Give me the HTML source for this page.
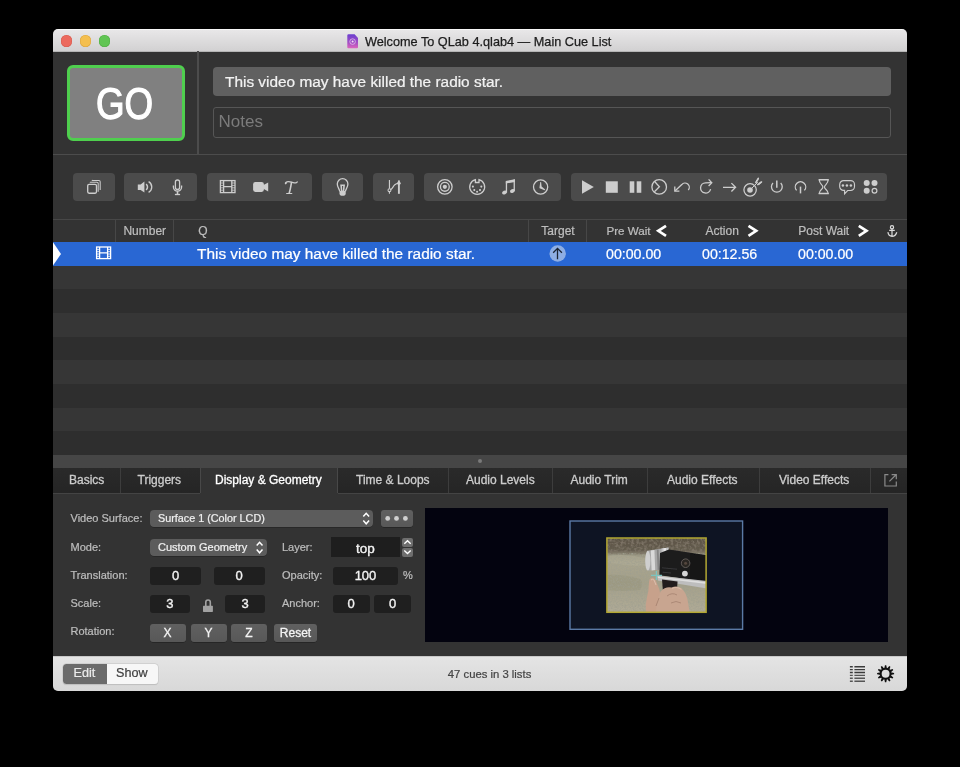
<!DOCTYPE html>
<html><head><meta charset="utf-8">
<style>
*{box-sizing:border-box;margin:0;padding:0}
html,body{width:960px;height:767px;background:#000;overflow:hidden;font-family:"Liberation Sans",sans-serif}
.a{position:absolute}
#win{position:absolute;left:53px;top:29px;width:854px;height:662px;background:#333;border-radius:5px;overflow:hidden}
#pg{position:absolute;left:-53px;top:-29px;width:960px;height:767px;will-change:transform}
.t{position:absolute;white-space:nowrap;line-height:1}
.grp{position:absolute;background:#4b4b4b;border-radius:4px;top:173px;height:28px}
.hdr{position:absolute;white-space:nowrap;line-height:1;font-size:12px;color:#bebebe}
.row{position:absolute;left:53px;width:854px;height:24px}
.vl{position:absolute;width:1px;background:#474747}
.tabd{position:absolute;top:468px;width:1px;height:25px;background:#3d3d3d}
.tab{position:absolute;white-space:nowrap;line-height:1;font-size:12px;color:#cdcdcd;top:474.2px;-webkit-text-stroke:0.3px currentColor}
.lbl{position:absolute;white-space:nowrap;line-height:1;font-size:11px;color:#bdbdbd}
.fld{position:absolute;background:#1f1f1f;border-radius:3px;color:#f4f4f4;font-size:13px;text-align:center;line-height:18px;height:18px;-webkit-text-stroke:0.35px #f4f4f4}
.pop{position:absolute;background:#5c5c5c;border-radius:4px;color:#f0f0f0;font-size:11px;white-space:nowrap;height:17px;line-height:17px;padding-left:8px;box-shadow:0 0.5px 0.5px rgba(0,0,0,.4)}
.btn{position:absolute;background:linear-gradient(#606060,#585858);border-radius:3px;color:#f4f4f4;font-size:12px;text-align:center;height:18px;line-height:18px;box-shadow:0 0.5px 0.5px rgba(0,0,0,.5);-webkit-text-stroke:0.3px #f4f4f4}
.stk{-webkit-text-stroke:0.22px currentColor}
</style></head><body>
<div id="win"><div id="pg">
  <!-- title bar -->
  <div class="a" style="left:53px;top:29px;width:854px;height:22.5px;background:linear-gradient(#e9e8e9,#d2d1d2);border-bottom:1px solid #b5b5b5;box-shadow:inset 0 1px 0 #f7f7f7"></div>
  <div class="a" style="left:60.8px;top:35.2px;width:11.5px;height:11.5px;border-radius:50%;background:#ec6a5e;box-shadow:inset 0 0 0 0.5px #d65a4e"></div>
  <div class="a" style="left:79.9px;top:35.2px;width:11.5px;height:11.5px;border-radius:50%;background:#f4bf4f;box-shadow:inset 0 0 0 0.5px #dba43d"></div>
  <div class="a" style="left:98.7px;top:35.2px;width:11.5px;height:11.5px;border-radius:50%;background:#61c554;box-shadow:inset 0 0 0 0.5px #4fad43"></div>
  <svg class="a" style="left:347px;top:33.5px" width="12" height="15" viewBox="0 0 12 15">
    <defs><linearGradient id="dg" x1="0" y1="0" x2="0" y2="1"><stop offset="0" stop-color="#6b3fcf"/><stop offset="0.6" stop-color="#a44fc4"/><stop offset="1" stop-color="#dc66bd"/></linearGradient></defs>
    <path d="M0.3 1.6 A1.3 1.3 0 0 1 1.6 0.3 H7.6 L11 4 V13.2 A1.1 1.1 0 0 1 9.9 14.3 H1.4 A1.1 1.1 0 0 1 0.3 13.2 Z" fill="url(#dg)"/>
    <circle cx="5.6" cy="7.6" r="2.8" fill="none" stroke="#e9c8f0" stroke-width="0.9" opacity="0.8"/>
    <circle cx="5.6" cy="7.6" r="1" fill="#f4e0f4"/>
  </svg>
  <div class="t" style="-webkit-text-stroke:0.25px #1c1c1c;left:365px;top:35.9px;font-size:12.7px;color:#1c1c1c">Welcome To QLab 4.qlab4 — Main Cue List</div>

  <!-- top section -->
  <div class="vl" style="left:197.4px;top:51px;height:103px;width:1.2px;background:#4c4c4c"></div>
  <div class="a" style="left:53px;top:153.9px;width:854px;height:1.1px;background:#4c4c4c"></div>
  <div class="a" style="left:66.5px;top:64.5px;width:118px;height:76.5px;border:3px solid #4fcf4e;border-radius:6px;background:#808080"></div>
  <div class="t" style="-webkit-text-stroke:1.25px #fff;left:95.6px;top:81.4px;font-size:44.8px;color:#fff;transform:scaleX(0.82);transform-origin:0 0">GO</div>
  <div class="a" style="left:213.3px;top:66.6px;width:677.5px;height:29.3px;background:#606060;border-radius:4px"></div>
  <div class="t stk" style="left:225px;top:73.5px;font-size:15.4px;color:#f2f2f2">This video may have killed the radio star.</div>
  <div class="a" style="left:213px;top:107px;width:678px;height:31px;border:1px solid #565656;border-radius:3px"></div>
  <div class="t" style="left:218.5px;top:112.5px;font-size:17px;color:#7b7b7b">Notes</div>

  <!-- toolbar groups -->
  <div class="grp" style="left:73px;width:42px"></div>
  <div class="grp" style="left:124px;width:73px"></div>
  <div class="grp" style="left:207px;width:105px"></div>
  <div class="grp" style="left:322px;width:41px"></div>
  <div class="grp" style="left:373px;width:41px"></div>
  <div class="grp" style="left:424px;width:137px"></div>
  <div class="grp" style="left:571px;width:316px"></div>
  <!-- table header -->
  <div class="a" style="left:53px;top:219px;width:854px;height:1px;background:#474747"></div>
  <div class="vl" style="left:115px;top:220px;height:22px"></div>
  <div class="vl" style="left:173px;top:220px;height:22px"></div>
  <div class="vl" style="left:528px;top:220px;height:22px"></div>
  <div class="vl" style="left:586px;top:220px;height:22px"></div>
  <div class="hdr stk" style="left:123.4px;top:224.6px">Number</div>
  <div class="hdr stk" style="left:198.3px;top:224.6px">Q</div>
  <div class="hdr stk" style="left:541.3px;top:224.6px">Target</div>
  <div class="hdr stk" style="left:606.5px;top:224.6px;font-size:11.6px">Pre Wait</div>
  <div class="hdr stk" style="left:705.5px;top:224.6px">Action</div>
  <div class="hdr stk" style="left:798.3px;top:224.6px">Post Wait</div>

  <!-- rows -->
  <div class="row" style="top:242px;background:#2967d3"></div>
  <div class="row" style="top:265.70px;height:23.64px;background:#363636"></div>
  <div class="row" style="top:289.34px;height:23.64px;background:#2e2e2e"></div>
  <div class="row" style="top:312.98px;height:23.64px;background:#363636"></div>
  <div class="row" style="top:336.62px;height:23.64px;background:#2e2e2e"></div>
  <div class="row" style="top:360.26px;height:23.64px;background:#363636"></div>
  <div class="row" style="top:383.90px;height:23.64px;background:#2e2e2e"></div>
  <div class="row" style="top:407.54px;height:23.64px;background:#363636"></div>
  <div class="row" style="top:431.18px;height:23.82px;background:#2e2e2e"></div>
  <div class="t stk" style="left:197px;top:245.5px;font-size:15.4px;color:#fff">This video may have killed the radio star.</div>
  <div class="t stk" style="left:606px;top:246.5px;font-size:14.2px;color:#fff">00:00.00</div>
  <div class="t stk" style="left:702px;top:246.5px;font-size:14.2px;color:#fff">00:12.56</div>
  <div class="t stk" style="left:798px;top:246.5px;font-size:14.2px;color:#fff">00:00.00</div>

  <!-- splitter -->
  <div class="a" style="left:53px;top:455px;width:854px;height:13px;background:#464646"></div>
  <div class="a" style="left:478px;top:459px;width:4px;height:4px;border-radius:50%;background:#7a7a7a"></div>

  <!-- tabs -->
  <div class="a" style="left:53px;top:468px;width:854px;height:26px;background:linear-gradient(#2a2a2a,#252525)"></div>
  <div class="a" style="left:53px;top:493px;width:854px;height:1px;background:#444"></div>
  <div class="a" style="left:200px;top:468px;width:138px;height:26px;background:#333"></div>
  <div class="tabd" style="left:120px"></div>
  <div class="tabd" style="left:200px;background:#484848"></div>
  <div class="tabd" style="left:337px;background:#484848"></div>
  <div class="tabd" style="left:448px"></div>
  <div class="tabd" style="left:552px"></div>
  <div class="tabd" style="left:647px"></div>
  <div class="tabd" style="left:759px"></div>
  <div class="tabd" style="left:870px"></div>
  <div class="tab" style="left:69px">Basics</div>
  <div class="tab" style="left:137.5px">Triggers</div>
  <div class="tab" style="left:215px;color:#fff">Display &amp; Geometry</div>
  <div class="tab" style="left:356px">Time &amp; Loops</div>
  <div class="tab" style="left:466px">Audio Levels</div>
  <div class="tab" style="left:570.5px">Audio Trim</div>
  <div class="tab" style="left:667px">Audio Effects</div>
  <div class="tab" style="left:779px">Video Effects</div>
  <!-- inspector -->
  <div class="lbl stk" style="left:70.5px;top:513.3px">Video Surface:</div>
  <div class="pop stk" style="left:150px;top:510px;width:223px;font-size:10.8px">Surface 1 (Color LCD)</div>
  <div class="btn" style="left:380.5px;top:510px;width:32px;height:17px"></div>
  <div class="lbl stk" style="left:70.5px;top:542.3px">Mode:</div>
  <div class="pop stk" style="left:150px;top:539px;width:117px">Custom Geometry</div>
  <div class="lbl stk" style="left:282px;top:542.3px">Layer:</div>
  <div class="fld" style="left:331px;top:537px;width:69px;height:20px;line-height:23px;font-size:13.5px;border-radius:0;background:#1e1e1e">top</div>
  <div class="a" style="left:402px;top:538px;width:11px;height:8.5px;border-radius:2px;background:#6e6e6e"></div>
  <div class="a" style="left:402px;top:548px;width:11px;height:8.5px;border-radius:2px;background:#6e6e6e"></div>

  <div class="lbl stk" style="left:70.5px;top:570.3px">Translation:</div>
  <div class="fld" style="left:150px;top:567px;width:51px">0</div>
  <div class="fld" style="left:213.5px;top:567px;width:51px">0</div>
  <div class="lbl stk" style="left:282px;top:570.3px">Opacity:</div>
  <div class="fld" style="left:333px;top:567px;width:65px">100</div>
  <div class="lbl stk" style="left:403px;top:570.3px">%</div>

  <div class="lbl stk" style="left:70.5px;top:598.3px">Scale:</div>
  <div class="fld" style="left:150px;top:595px;width:39.5px">3</div>
  <div class="fld" style="left:225px;top:595px;width:40px">3</div>
  <div class="lbl stk" style="left:282px;top:598.3px">Anchor:</div>
  <div class="fld" style="left:332.5px;top:595px;width:37px">0</div>
  <div class="fld" style="left:374px;top:595px;width:37px">0</div>

  <div class="lbl stk" style="left:70.5px;top:626.3px">Rotation:</div>
  <div class="btn" style="left:149.5px;top:623.5px;width:36px">X</div>
  <div class="btn" style="left:190.5px;top:623.5px;width:36px">Y</div>
  <div class="btn" style="left:231px;top:623.5px;width:36px">Z</div>
  <div class="btn" style="left:274px;top:623.5px;width:43px">Reset</div>

  <!-- preview -->
  <div class="a" style="left:425px;top:508px;width:463px;height:134px;background:#03030f"></div>

  <!-- bottom bar -->
  <div class="a" style="left:53px;top:656px;width:854px;height:35px;background:linear-gradient(#e4e4e4,#d8d8d8);border-top:1px solid #c8c8c8"></div>
  <div class="a" style="left:63px;top:664px;width:94.5px;height:19.5px;border-radius:3.5px;background:#f7f7f7;box-shadow:0 0 0 0.5px #c4c4c4,0 0.5px 1px rgba(0,0,0,.15)"></div>
  <div class="a" style="left:63px;top:664px;width:44px;height:19.5px;border-radius:3.5px 0 0 3.5px;background:#6b6b6b"></div>
  <div class="t stk" style="left:73.5px;top:667.3px;font-size:12.6px;color:#ececec">Edit</div>
  <div class="t stk" style="left:116px;top:667.3px;font-size:12.6px;color:#3f3f3f">Show</div>
  <div class="t stk" style="left:447.8px;top:668.8px;font-size:11.3px;color:#454545">47 cues in 3 lists</div>
</div></div>
<svg class="a" style="left:0;top:0;z-index:5" width="960" height="767" viewBox="0 0 960 767">
<g fill="none" stroke="#cdcdcd" stroke-width="1.3" stroke-linecap="butt" stroke-linejoin="miter">
  <!-- stacked windows -->
  <rect x="87.7" y="184.4" width="8.8" height="8.8" rx="1.4" stroke-width="1.35"/>
  <path d="M89.9 182.6 A0.6 0.6 0 0 1 90.5 182.3 H96.9 A1.3 1.3 0 0 1 98.2 183.6 V191.8" stroke-width="1.05"/>
  <path d="M91.9 180.7 A0.6 0.6 0 0 1 92.5 180.4 H98.9 A1.3 1.3 0 0 1 100.2 181.7 V189.9" stroke-width="1.05"/>
  <!-- speaker arcs -->
  <path d="M146.1 184.2 A3.6 3.6 0 0 1 146.1 189.9" stroke-width="1.5"/>
  <path d="M148.6 181.6 A6.2 6.2 0 0 1 148.6 192.4"/>
  <!-- mic -->
  <rect x="175.4" y="180" width="4.2" height="9.5" rx="2.1"/>
  <path d="M173.4 185.6 V187.1 A4.1 4.1 0 0 0 181.6 187.1 V185.6"/>
  <path d="M177.5 191.2 V194.2" stroke-width="1.6"/>
  <path d="M174.9 194.5 H180.1"/>
  <!-- film -->
  <rect x="220.4" y="180.6" width="14.6" height="12"/>
  <path d="M223.6 180.6 V192.6 M231.8 180.6 V192.6 M223.6 186.6 H231.8"/>
  <path d="M220.4 183 H223.6 M220.4 185.4 H223.6 M220.4 187.8 H223.6 M220.4 190.2 H223.6 M231.8 183 H235 M231.8 185.4 H235 M231.8 187.8 H235 M231.8 190.2 H235" stroke-width="0.8"/>
  <!-- bulb -->
  <path d="M339.8 191.4 C339.5 189 337.3 187.6 337.3 184 A5.3 5.3 0 0 1 347.9 184 C347.9 187.6 345.7 189 345.4 191.4"/>
  <!-- fade -->
  <path d="M389.45 180 V188.6 M389.45 191.8 V193.8" stroke-width="1.15"/>
  <path d="M398.9 180.4 V193.8" stroke-width="1.9"/>
  <path d="M390.6 189.6 C392.6 188.8 393 186.2 394.8 184.8 C395.8 184 396.8 183.5 398.2 183.3" stroke-width="1.15"/>
  <circle cx="389.45" cy="190.2" r="1.45" stroke-width="1.1"/>
  <!-- osc -->
  <circle cx="444.85" cy="186.85" r="7.25"/>
  <circle cx="444.85" cy="186.85" r="4.4"/>
  <!-- midi -->
  <path d="M475.4 179.6 A7.45 7.45 0 1 0 479 179.6 V182.5 H475.4 Z"/>
  <!-- clock -->
  <circle cx="540.6" cy="187" r="7.1"/>
  <!-- load circle -->
  <circle cx="659.2" cy="186.9" r="7.3"/>
  <path d="M654.4 181.3 L659.4 186.8 L654.4 191.8"/>
  <!-- undo -->
  <path d="M688.3 190 A3.9 3.9 0 0 0 681.8 184.6 L675.2 190.7"/>
  <path d="M674.8 186.4 V191.2 H679.4"/>
  <!-- redo -->
  <path d="M710.6 189.2 A5.1 5.1 0 1 1 705.5 182.8 L711 182.7"/>
  <path d="M708.6 179.4 L711.8 182.7 L708.6 186"/>
  <!-- arrow -->
  <path d="M723 187.3 H735.6 M731.4 183.1 L735.6 187.3 L731.4 191.5"/>
  <!-- target -->
  <circle cx="750.1" cy="189.85" r="6.2" stroke-width="1.25"/>
  <path d="M750 190 L757.8 182.2" stroke-width="1"/>
  <!-- power -->
  <path d="M773 183 A5.4 5.4 0 1 0 780.7 183"/>
  <path d="M776.8 180.4 V187.7" stroke-width="1.5"/>
  <!-- listen -->
  <path d="M796.6 190.4 A5.2 5.2 0 1 1 804.4 190.4"/>
  <path d="M800.5 186.6 V193.4" stroke-width="1.5"/>
  <!-- hourglass -->
  <path d="M818.6 179.8 H828.8 M818.6 193.6 H828.8" stroke-width="1.5"/>
  <path d="M819.3 179.8 C819.1 184.2 822.9 184.6 822.9 187 C822.9 189.4 819.1 189.8 819.3 193.6 M828.1 179.8 C828.3 184.2 824.5 184.6 824.5 187 C824.5 189.4 828.3 189.8 828.1 193.6" stroke-width="1.2"/>
  <!-- speech -->
  <path d="M843.6 180.6 H850.6 A3.9 3.9 0 0 1 854.5 184.5 V186.6 A3.9 3.9 0 0 1 850.6 190.5 H847.6 L844.6 193.8 V190.4 H843.6 A3.9 3.9 0 0 1 839.7 186.5 V184.5 A3.9 3.9 0 0 1 843.6 180.6 Z" stroke-width="1.15"/>
  <!-- 4 dots outline -->
  <circle cx="874.5" cy="190.8" r="2.4" stroke-width="1.2"/>
</g>
<g fill="#cdcdcd" stroke="none">
  <!-- speaker body -->
  <path d="M137.8 184.5 H140.6 L144.4 181.4 V192.6 L140.6 189.9 H137.8 Z"/>
  <!-- camera -->
  <rect x="253.1" y="181.9" width="10.8" height="10" rx="2.3"/>
  <path d="M263 185.3 L268.2 182.4 V191.4 L263 188.5 Z"/>
  <!-- bulb base -->
  <path d="M339.5 190.9 H345.7 V193.4 Q345.7 195.7 342.6 195.7 Q339.5 195.7 339.5 193.4 Z"/>
  <path d="M340.2 184.6 H345 L344.3 191 H340.9 Z M342 186.1 L342.3 190.6 H342.9 L343.2 186.1 Z" fill-rule="evenodd"/>
  <!-- fade nodes -->
  <circle cx="398.9" cy="183.3" r="1.75"/>
  <!-- osc dot -->
  <circle cx="444.85" cy="186.85" r="2.1"/>
  <!-- midi dots -->
  <circle cx="472.9" cy="186.6" r="1.05"/>
  <circle cx="474.3" cy="190.1" r="1.05"/>
  <circle cx="477.1" cy="191.7" r="1.05"/>
  <circle cx="480" cy="190.1" r="1.05"/>
  <circle cx="481.3" cy="186.6" r="1.05"/>
  <!-- music -->
  <path d="M505.8 181.5 Q506 180.9 506.8 180.7 L514.9 179.3 V182 L505.8 183.6 Z"/>
  <rect x="505.8" y="181.6" width="1.3" height="11"/>
  <rect x="513.6" y="179.4" width="1.3" height="11.6"/>
  <ellipse cx="504.5" cy="192.5" rx="2.5" ry="1.85" transform="rotate(-22 504.5 192.5)"/>
  <ellipse cx="512.4" cy="191" rx="2.5" ry="1.85" transform="rotate(-22 512.4 191)"/>
  <!-- clock hands -->
  <path d="M540.3 182 L541.1 182 L541.6 186.4 L545.2 189.6 L544.6 190.2 L539.6 188.2 Q539.3 187.4 539.6 186.6 Z"/>
  <!-- play stop pause -->
  <path d="M582 180.3 L593.8 187 L582 193.7 Z"/>
  <rect x="605.8" y="181.3" width="12" height="11.5"/>
  <rect x="629.7" y="181.3" width="4.6" height="11.5"/>
  <rect x="636.7" y="181.3" width="4.6" height="11.5"/>
  <!-- target dot & feathers -->
  <circle cx="750" cy="190" r="2.8"/>
  <path d="M755.4 183.2 L755.8 181 L758.6 177.4 L758.4 180 Z"/>
  <path d="M755.9 182.6 L758.3 178.4 M757.8 184.6 L761.4 182" stroke="#cdcdcd" stroke-width="1.6" stroke-linecap="round"/>
  <path d="M757.2 185 L759.4 184.8 L762.4 181.4 L760 182.2 Z"/>
  <!-- speech dots -->
  <circle cx="842.9" cy="185.6" r="1.25"/>
  <circle cx="846.9" cy="185.6" r="1.25"/>
  <circle cx="850.9" cy="185.6" r="1.25"/>
  <!-- 4 dots -->
  <circle cx="866.7" cy="183.1" r="3"/>
  <circle cx="874.5" cy="183.1" r="3"/>
  <circle cx="866.7" cy="190.8" r="3"/>
</g>
<!-- T -->
<g fill="none" stroke="#cdcdcd" stroke-linecap="round">
  <path d="M285.6 183.6 C285.6 181.8 287.6 181.4 290.2 181.9 C292.4 182.3 294.2 183.1 295.8 182.9 C296.6 182.8 297.1 182.4 297.2 181.9" stroke-width="1.25"/>
  <path d="M291.5 182.5 C290.9 186 290.2 190 289.2 193.1" stroke-width="1.55"/>
  <path d="M286.6 193.5 H291.8" stroke-width="1.1"/>
</g>
<circle cx="285.7" cy="183.3" r="0.95" fill="#cdcdcd"/>
</svg>
<svg class="a" style="left:0;top:0;z-index:6" width="960" height="767" viewBox="0 0 960 767">
<!-- header chevrons -->
<g fill="none" stroke="#fff" stroke-width="2.7" stroke-linecap="butt" stroke-linejoin="miter">
  <path d="M666 225.8 L658.3 230.8 L666 235.8"/>
  <path d="M748.5 225.8 L756.2 230.8 L748.5 235.8"/>
  <path d="M858.8 225.8 L866.5 230.8 L858.8 235.8"/>
</g>
<!-- anchor -->
<g fill="none" stroke="#dcdcdc" stroke-width="1.2">
  <circle cx="892" cy="227.2" r="1.6"/>
  <path d="M892 228.8 V236.3 M889.2 230.4 H894.8 M887.9 232.2 Q888.5 236.3 892 236.3 Q895.5 236.3 896.8 232.2"/>
</g>
<!-- playhead -->
<path d="M53 242.2 L61 253.9 L53 265.6 Z" fill="#fff"/>
<!-- row film icon -->
<g fill="none" stroke="#fff" stroke-width="1.3">
  <rect x="96.6" y="247" width="14" height="11.6"/>
  <path d="M99.6 247 V258.6 M107.6 247 V258.6 M99.6 252.8 H107.6"/>
  <path d="M96.6 249.4 H99.6 M96.6 251.7 H99.6 M96.6 254 H99.6 M96.6 256.3 H99.6 M107.6 249.4 H110.6 M107.6 251.7 H110.6 M107.6 254 H110.6 M107.6 256.3 H110.6" stroke-width="0.8"/>
</g>
<!-- target circle -->
<circle cx="557.7" cy="253.5" r="8.2" fill="#8eaee4"/>
<g fill="none" stroke="#1b2433" stroke-width="1.3">
  <path d="M557.5 248.4 V259.2 M553.2 252.7 L557.5 248.4 L561.9 252.7"/>
</g>
<!-- popup arrows -->
<g fill="none" stroke="#fff" stroke-width="1.5">
  <path d="M363.3 516.5 L366.2 513.3 L369.1 516.5 M363.3 520.6 L366.2 523.8 L369.1 520.6"/>
  <path d="M256.7 545.5 L259.6 542.3 L262.5 545.5 M256.7 549.6 L259.6 552.8 L262.5 549.6"/>
</g>
<!-- stepper chevrons -->
<g fill="none" stroke="#fff" stroke-width="1.4">
  <path d="M404.3 543.8 L407.5 540.8 L410.7 543.8 M404.3 550.6 L407.5 553.6 L410.7 550.6"/>
</g>
<!-- dots button -->
<g fill="#cfcfcf">
  <circle cx="387.7" cy="518.4" r="2.4"/>
  <circle cx="396.5" cy="518.4" r="2.4"/>
  <circle cx="405.4" cy="518.4" r="2.4"/>
</g>
<!-- lock -->
<g>
  <path d="M205.8 606 V602.3 A2.25 2.25 0 0 1 210.3 602.3 V606" fill="none" stroke="#a2a2a2" stroke-width="1.6"/>
  <rect x="203" y="605.8" width="9.9" height="6.1" rx="0.6" fill="#a2a2a2"/>
</g>
<!-- popout icon -->
<g fill="none" stroke="#8a8a8a" stroke-width="1.2">
  <path d="M888.4 474.6 H884.9 V486 H896.3 V481.6"/>
  <path d="M889.4 481.4 L895.8 475 M891.6 474.6 H896.3 V479.3"/>
</g>
<!-- bottom list icon -->
<g stroke-width="1.4" transform="translate(0 0.3)">
  <path d="M849.9 666.4 H852.8 M854.4 666.4 H865 M849.9 669.3 H852.8 M854.4 669.3 H865 M849.9 672.2 H852.8 M854.4 672.2 H865" stroke="#3a3a3a"/>
  <path d="M849.9 675.1 H852.8 M854.4 675.1 H865 M849.9 678 H852.8 M854.4 678 H865 M849.9 680.9 H852.8 M854.4 680.9 H865" stroke="#555"/>
</g>
<!-- gear -->
<g transform="translate(885.6 673.7)">
  <circle r="4.9" fill="none" stroke="#111" stroke-width="1.95"/>
  <path d="M5.00 1.40 L8.50 0.65 L8.50 -0.65 L5.00 -1.40 Z M3.63 3.71 L7.04 4.81 L7.69 3.69 L5.03 1.29 Z M1.29 5.03 L3.69 7.69 L4.81 7.04 L3.71 3.63 Z M-1.40 5.00 L-0.65 8.50 L0.65 8.50 L1.40 5.00 Z M-3.71 3.63 L-4.81 7.04 L-3.69 7.69 L-1.29 5.03 Z M-5.03 1.29 L-7.69 3.69 L-7.04 4.81 L-3.63 3.71 Z M-5.00 -1.40 L-8.50 -0.65 L-8.50 0.65 L-5.00 1.40 Z M-3.63 -3.71 L-7.04 -4.81 L-7.69 -3.69 L-5.03 -1.29 Z M-1.29 -5.03 L-3.69 -7.69 L-4.81 -7.04 L-3.71 -3.63 Z M1.40 -5.00 L0.65 -8.50 L-0.65 -8.50 L-1.40 -5.00 Z M3.71 -3.63 L4.81 -7.04 L3.69 -7.69 L1.29 -5.03 Z M5.03 -1.29 L7.69 -3.69 L7.04 -4.81 L3.63 -3.71 Z" fill="#111"/>
</g>
<!-- preview stage -->
<rect x="570" y="521" width="172.6" height="108.3" fill="#0e1423" stroke="#5b7aa6" stroke-width="1.4"/>
<defs>
  <linearGradient id="pbg" x1="0" y1="0" x2="0" y2="1">
    <stop offset="0" stop-color="#5a5244"/>
    <stop offset="0.17" stop-color="#645c4e"/>
    <stop offset="0.24" stop-color="#9a9682"/>
    <stop offset="0.35" stop-color="#a8a48e"/>
    <stop offset="0.6" stop-color="#a4a08a"/>
    <stop offset="1" stop-color="#b0ab97"/>
  </linearGradient>
  <filter id="soft" x="-10%" y="-10%" width="120%" height="120%"><feGaussianBlur stdDeviation="0.45"/></filter>
  <filter id="noise" x="0" y="0" width="100%" height="100%">
    <feTurbulence type="fractalNoise" baseFrequency="0.38" numOctaves="2" seed="3"/>
    <feColorMatrix type="matrix" values="0 0 0 0 0.2  0 0 0 0 0.17  0 0 0 0 0.13  3 0 0 0 -1.2"/>
    <feComposite in2="SourceGraphic" operator="in"/>
  </filter>
  <filter id="noise2" x="0" y="0" width="100%" height="100%">
    <feTurbulence type="fractalNoise" baseFrequency="0.6" numOctaves="2" seed="7"/>
    <feColorMatrix type="matrix" values="0 0 0 0 0.35  0 0 0 0 0.35  0 0 0 0 0.28  2.2 0 0 0 -0.9"/>
    <feComposite in2="SourceGraphic" operator="in"/>
  </filter>
  <clipPath id="pclip"><rect x="607" y="538.3" width="99" height="74"/></clipPath>
</defs>
<g clip-path="url(#pclip)">
 <g filter="url(#soft)">
  <rect x="606" y="537" width="101" height="77" fill="url(#pbg)"/>
  <!-- olive darker patches -->
  <path d="M606 575 Q622 574 640 579 Q644 584 640 590 Q622 592 606 590 Z" fill="#8c8a70" opacity="0.3"/>
  <path d="M606 556 Q625 553 646 558 L646 566 Q625 566 606 562 Z" fill="#b3af9a" opacity="0.5"/>
 </g>
 <rect x="606" y="537" width="101" height="17" fill="#000" filter="url(#noise)" opacity="1"/>
 <rect x="606" y="553" width="101" height="60" fill="#000" filter="url(#noise2)" opacity="0.9"/>
 <g filter="url(#soft)">
  <!-- silver lens -->
  <path d="M647.5 550.8 L668.5 547.6 L669 569.2 L648 570.6 Q644.6 560.6 647.5 550.8 Z" fill="#a8a8a8"/>
  <ellipse cx="647.8" cy="560.7" rx="2.6" ry="9.9" fill="#cfcfcf"/>
  <path d="M650.8 550.4 L654.4 549.9 L655.2 570 L651.6 570.4 Z" fill="#d9d9d9"/>
  <path d="M656.8 549.7 L658.6 549.4 L659.4 569.7 L657.6 569.9 Z" fill="#858585"/>
  <path d="M661.5 548.6 L668.5 547.6 L668.9 569.2 L662 569.6 Z" fill="#c4c4c4"/>
  <path d="M663.5 548.3 L666 548 L666.4 569.3 L663.9 569.5 Z" fill="#e6e6e6"/>
  <!-- camera body -->
  <path d="M660 553 L669 549.6 L707 555.2 L707 582 L659.4 575.2 Z" fill="#1b1b1d"/>
  <path d="M690.2 553.4 L707 555.6 L707 580.5 L690.4 579 Z" fill="#121214"/>
  <circle cx="685.6" cy="563.2" r="4.3" fill="#2a2624" stroke="#66615b" stroke-width="0.9"/>
  <circle cx="685.6" cy="563.2" r="1.5" fill="#55473d"/>
  <circle cx="684.9" cy="573.6" r="2.9" fill="#d6d6d6"/>
  <path d="M662 567.8 L677 569.2 M662.5 572.2 L671 573" stroke="#4a4a4a" stroke-width="0.6"/>
  <!-- silver bar -->
  <path d="M657 575.6 L707 581 L707 588.6 L658 580.6 Z" fill="#bdbdbd"/>
  <path d="M658 576.6 L707 582.3 L707 584 L658 578.1 Z" fill="#dedede"/>
  <!-- grip -->
  <path d="M662 579.5 L677.5 581.5 L676.5 600 L663.5 598 Z" fill="#241c1c"/>
  <!-- hand -->
  <path d="M650 578.6 Q652.8 576.4 655.4 579.4 L659.4 589.6 Q661 594.6 660 600 L658.2 613 L646 613 Q645 605 646.8 598 Q648.8 591 648.8 585 Q648.8 580.6 650 578.6 Z" fill="#c7a18b"/>
  <path d="M660.6 591.4 Q665.6 586.2 671.6 587.6 Q676.6 585 681 588 Q686 592 687.6 600 L689.8 613 L656 613 Q656 600.4 660.6 591.4 Z" fill="#c8a590"/>
  <path d="M651 580 Q652.5 578.5 654 580 L656 585" fill="none" stroke="#dcc0ad" stroke-width="1"/>
  <path d="M672 588.4 Q677 586.2 681.5 589.4" fill="none" stroke="#d9bba7" stroke-width="1.1"/>
  <path d="M667 596 Q672 592 677 595 M671 603 Q676 600 681 603" fill="none" stroke="#a58270" stroke-width="0.8"/>
  <path d="M656 606 L659 598" fill="none" stroke="#9d7a67" stroke-width="0.7"/>
 </g>
  <!-- crosshair -->
  <path d="M656.4 571 V580 M651 575.4 H662" stroke="#7cc4c0" stroke-width="1.2" filter="url(#soft)"/>
</g>
<rect x="606.9" y="538" width="99.2" height="74.3" fill="none" stroke="#b3a833" stroke-width="1.5"/>
</svg>
</body></html>
